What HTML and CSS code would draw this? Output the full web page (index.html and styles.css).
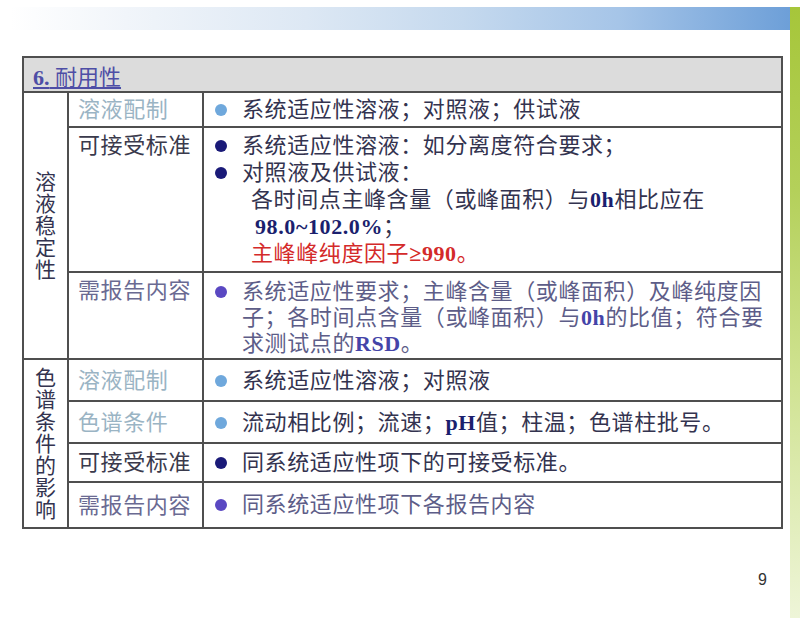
FILE: index.html
```html
<!DOCTYPE html>
<html lang="zh">
<head>
<meta charset="utf-8">
<title>耐用性</title>
<link rel="stylesheet" href="styles.css">
</head>
<body>
<div class="slide">
  <div class="topbar"></div>
  <div class="greenbar"></div>
  <table class="grid">
    <colgroup><col class="c1"><col class="c2"><col class="c3"></colgroup>
    <tr class="r-head">
      <td colspan="3" class="head"><span class="head-text"><b>6.</b> 耐用性</span></td>
    </tr>
    <tr class="r1">
      <td rowspan="3" class="side"><div class="vert">溶液稳定性</div></td>
      <td class="label light">溶液配制</td>
      <td class="body"><div class="item"><span class="dot dot-light"></span><span class="txt">系统适应性溶液；对照液；供试液</span></div></td>
    </tr>
    <tr class="r2">
      <td class="label dark top">可接受标准</td>
      <td class="body top">
        <div class="item"><span class="dot dot-navy"></span><span class="txt">系统适应性溶液：如分离度符合要求；</span></div>
        <div class="item"><span class="dot dot-navy"></span><span class="txt">对照液及供试液：</span></div>
        <div class="sub">各时间点主峰含量（或峰面积）与<b class="num">0h</b>相比应在</div>
        <div class="sub"><b class="num shift">98.0~102.0%</b>；</div>
        <div class="sub red">主峰峰纯度因子<b>≥990</b>。</div>
      </td>
    </tr>
    <tr class="r3">
      <td class="label purple top">需报告内容</td>
      <td class="body top report">
        <div class="item"><span class="dot dot-purple"></span><span class="txt">系统适应性要求；主峰含量（或峰面积）及峰纯度因<br>子；各时间点含量（或峰面积）与<b class="pnum">0h</b>的比值；符合要<br>求测试点的<b class="pnum">RSD</b>。</span></div>
      </td>
    </tr>
    <tr class="g1">
      <td rowspan="4" class="side"><div class="vert">色谱条件的影响</div></td>
      <td class="label light">溶液配制</td>
      <td class="body"><div class="item"><span class="dot dot-light"></span><span class="txt">系统适应性溶液；对照液</span></div></td>
    </tr>
    <tr class="g2">
      <td class="label light">色谱条件</td>
      <td class="body"><div class="item"><span class="dot dot-light"></span><span class="txt">流动相比例；流速；<b class="num">pH</b>值；柱温；色谱柱批号。</span></div></td>
    </tr>
    <tr class="g3">
      <td class="label dark">可接受标准</td>
      <td class="body"><div class="item"><span class="dot dot-navy"></span><span class="txt">同系统适应性项下的可接受标准。</span></div></td>
    </tr>
    <tr class="g4">
      <td class="label purple">需报告内容</td>
      <td class="body report"><div class="item"><span class="dot dot-purple"></span><span class="txt">同系统适应性项下各报告内容</span></div></td>
    </tr>
  </table>
  <div class="pagenum">9</div>
</div>
</body>
</html>
```
FILE: styles.css
```css
* { box-sizing: border-box; }
html, body { margin: 0; padding: 0; background: #ffffff; }
body {
  font-family: "Liberation Serif", "Noto Sans CJK SC", serif;
  color: #33334f;
}
.slide {
  position: relative;
  width: 800px;
  height: 618px;
  overflow: hidden;
  display: flex;
  flex-direction: column;
  background: #ffffff;
}
.topbar {
  margin: 7px 10px 0 10px;
  height: 23px;
  background: linear-gradient(to right, #ffffff 0%, #f1f5fa 15%, #dde8f4 38%, #c5d9ee 58%, #a6c5e8 78%, #6d9fd8 100%);
}
.greenbar {
  position: absolute;
  right: 0;
  top: 7px;
  bottom: 0;
  width: 10px;
  background: linear-gradient(to bottom, #a6c63a 0%, #b4d05a 30%, #cfe290 60%, #eef5d8 100%);
}
.grid {
  border-collapse: collapse;
  table-layout: fixed;
  width: 759px;
  margin: 26px 0 0 22px;
}
col.c1 { width: 45px; }
col.c2 { width: 135px; }
col.c3 { width: 579px; }
.grid td {
  border: 2px solid #4f4f4f;
  padding: 0;
  vertical-align: middle;
  font-size: 22px;
  letter-spacing: 0.6px;
}
.grid td.top { vertical-align: top; }
.r-head { height: 35px; }
.r1 { height: 35px; }
.r2 { height: 145px; }
.r3 { height: 87px; }
.g1 { height: 42px; }
.g2 { height: 42px; }
.g3 { height: 39px; }
.g4 { height: 46px; }
.head {
  background: #dcdcdc;
  padding-left: 9px !important;
}
.head-text {
  color: #4e4ea6;
  text-decoration: underline;
  font-size: 22px;
  letter-spacing: 0;
}
.side { text-align: center; }
.vert {
  width: 22px;
  margin: 0 auto;
  font-size: 21px;
  line-height: 22px;
  letter-spacing: 0;
  color: #33334f;
}
.label {
  padding-left: 9px !important;
  line-height: 27px;
  white-space: nowrap;
}
.label.top { padding-top: 4px !important; }
.label.light { color: #9ab4c4; }
.label.dark { color: #3a3a4c; }
.label.purple { color: #6a6a92; }
.body {
  padding-left: 11px !important;
  line-height: 27px;
}
.body.top { padding-top: 4px !important; }
.report { line-height: 26px; }
.report.top { padding-top: 6px !important; }
.item {
  display: flex;
  align-items: flex-start;
  gap: 15px;
}
.dot {
  flex: none;
  width: 12px;
  height: 12px;
  border-radius: 50%;
  margin-top: 8px;
}
.report .dot { margin-top: 7px; }
.dot-light { background: #6fa8dc; }
.dot-navy { background: #1a1a78; }
.dot-purple { background: #5a48c2; }
.txt { color: #33334f; }
.report .txt { color: #5d5d88; }
.sub { padding-left: 36px; }
.num { color: #1b1f6e; font-weight: bold; }
.pnum { color: #4444a8; font-weight: bold; }
.shift { margin-left: 4px; }
.red { color: #d42a2a; }
.pagenum {
  margin-top: 42px;
  align-self: flex-end;
  padding-right: 33px;
  font-family: "Liberation Sans", Arial, sans-serif;
  font-size: 16px;
  line-height: 18px;
  color: #333333;
}
```
